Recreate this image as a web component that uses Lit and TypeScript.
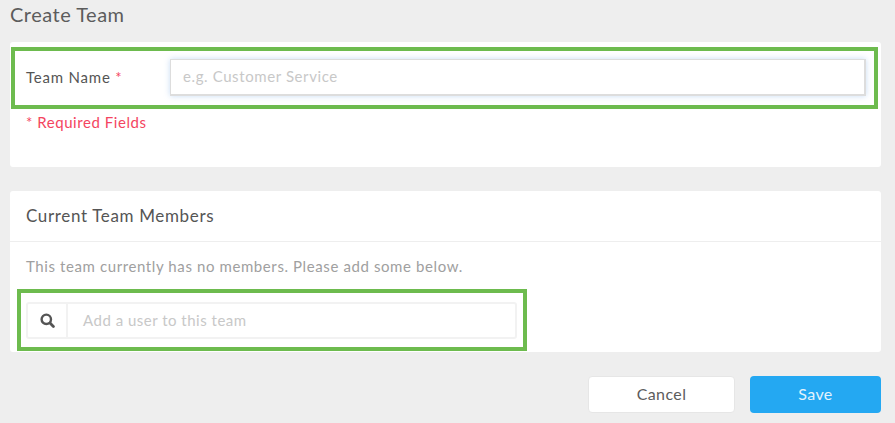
import { LitElement, html, css } from "lit";
import { customElement } from "lit/decorators.js";

@customElement("app-root")
export class AppRoot extends LitElement {
  static styles = css`
    :host {
      display: block;
      width: 895px;
      height: 423px;
      overflow: hidden;
      box-sizing: border-box;
      padding: 0 14px 0 10px;
      background: #eeeeee;
      font-family: Lato, "Open Sans", sans-serif;
      color: #555555;
    }

    h1 {
      margin: 0;
      height: 42px;
      padding-top: 3px;
      box-sizing: border-box;
      font-size: 20px;
      line-height: 22px;
      font-weight: 400;
      letter-spacing: 0.5px;
      color: #5c5c5c;
    }

    .card {
      background: #fff;
      border-radius: 3px;
    }

    .team {
      height: 125px;
      padding: 5px 3px 0 1px;
      box-sizing: border-box;
    }

    .highlight {
      border: 4px solid #6dbb4e;
      box-sizing: border-box;
    }

    .name-row {
      display: flex;
      align-items: center;
      height: 62px;
      padding: 0 8px 2px 11px;
    }

    .name-row label {
      width: 144px;
      flex: none;
      font-size: 15px;
      letter-spacing: 0.8px;
    }

    .star,
    .required {
      color: #f4455f;
    }

    .field {
      flex: 1;
      height: 37px;
      box-sizing: border-box;
      border: 2px solid #dddddd;
      border-width: 1px 2px 2px 1px;
      box-shadow: 0 0 6px rgba(120, 170, 230, 0.4);
      display: flex;
      align-items: center;
      padding: 0 0 2px 12px;
      font-size: 15px;
      letter-spacing: 0.6px;
      color: #c8c8c8;
      background: #fff;
    }

    .required {
      margin: 4px 0 0 15px;
      font-size: 15px;
      line-height: 18px;
      letter-spacing: 0.55px;
    }

    .members {
      margin-top: 24px;
      height: 161px;
      box-sizing: border-box;
    }

    .members h2 {
      margin: 0;
      height: 51px;
      padding: 15px 0 0 16px;
      box-sizing: border-box;
      border-bottom: 1px solid #eeeeee;
      font-size: 17px;
      line-height: 20px;
      font-weight: 400;
      letter-spacing: 0.65px;
    }

    .empty {
      margin: 15px 0 0 16px;
      font-size: 15px;
      line-height: 18px;
      letter-spacing: 0.6px;
      color: #a0a0a0;
    }

    .search-wrap {
      margin: 14px 0 0 7px;
      width: 510px;
      height: 62px;
      padding: 9px 6px 0 5px;
    }

    .search {
      display: flex;
      height: 37px;
      box-sizing: border-box;
      border: 2px solid #f2f2f2;
      border-radius: 3px;
    }

    .addon {
      width: 40px;
      flex: none;
      display: flex;
      align-items: center;
      justify-content: center;
      border-right: 2px solid #f2f2f2;
      box-sizing: border-box;
    }

    .addon svg {
      display: block;
    }

    .search .hint {
      padding: 0 0 2px 15px;
      display: flex;
      align-items: center;
      font-size: 15px;
      letter-spacing: 0.5px;
      color: #c8c8c8;
    }

    .actions {
      display: flex;
      justify-content: flex-end;
      gap: 15px;
      margin-top: 24px;
    }

    button {
      height: 37px;
      box-sizing: border-box;
      border-radius: 4px;
      font: inherit;
      font-size: 16px;
      letter-spacing: 0.4px;
      cursor: pointer;
      padding: 0 0 2px;
    }

    .cancel {
      width: 147px;
      background: #fff;
      border: 1px solid #e6e6e6;
      color: #5c5c5c;
    }

    .save {
      width: 131px;
      background: #24a8f2;
      border: 0;
      color: #e3f3fd;
    }
  `;

  render() {
    return html`
      <h1>Create Team</h1>
      <section class="card team">
        <div class="highlight name-row">
          <label>Team Name <span class="star">*</span></label>
          <div class="field">e.g. Customer Service</div>
        </div>
        <div class="required">* Required Fields</div>
      </section>
      <section class="card members">
        <h2>Current Team Members</h2>
        <p class="empty">This team currently has no members. Please add some below.</p>
        <div class="highlight search-wrap">
          <div class="search">
            <div class="addon">
              <svg width="15" height="15" viewBox="0 0 15 15" fill="none" stroke="#555" aria-hidden="true">
                <circle cx="6.3" cy="6.3" r="4.7" stroke-width="2.4"></circle>
                <path d="M10 10 13.4 13.4" stroke-width="2.8" stroke-linecap="round"></path>
              </svg>
            </div>
            <div class="hint">Add a user to this team</div>
          </div>
        </div>
      </section>
      <div class="actions">
        <button class="cancel">Cancel</button>
        <button class="save">Save</button>
      </div>
    `;
  }
}
